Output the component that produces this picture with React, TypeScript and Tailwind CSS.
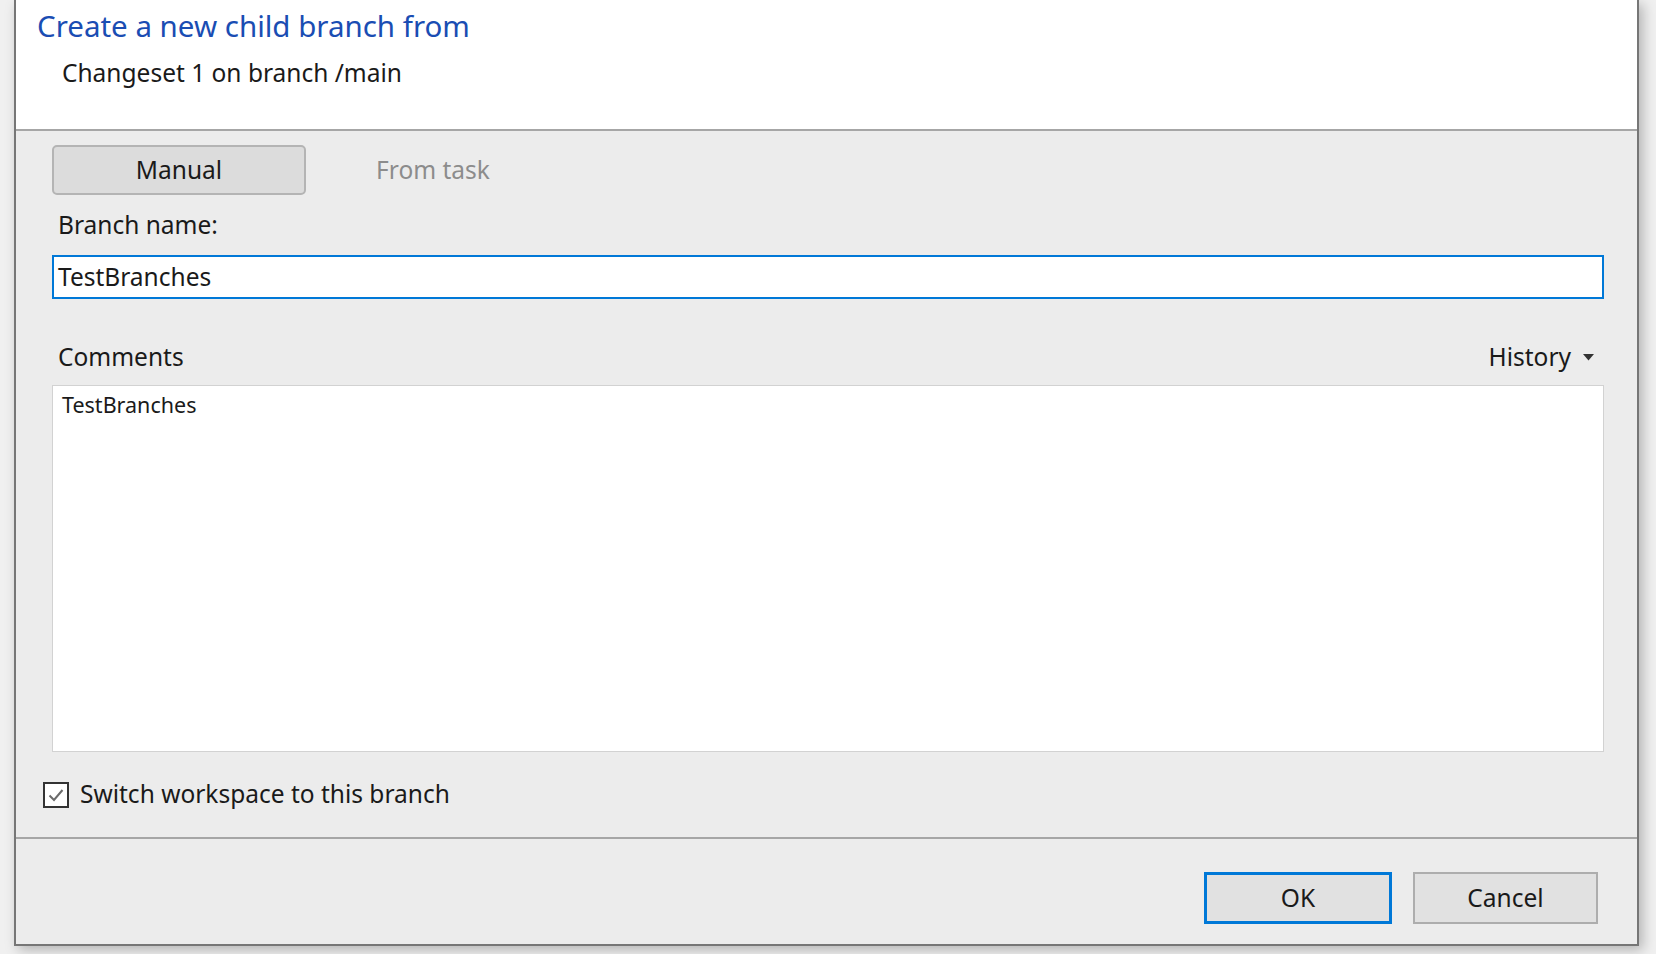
import React from "react";

const font = { fontFamily: '"Noto Sans", "Open Sans", sans-serif' };

function Check() {
  return (
    <div className="w-[26px] h-[26px] border-2 border-[#333333] bg-white flex items-center justify-center">
      <svg width="18" height="18" viewBox="0 0 18 18">
        <path d="M2.5 9.5 L7 14 L15.5 4" fill="none" stroke="#6b6b6b" strokeWidth="2" />
      </svg>
    </div>
  );
}

export default function App() {
  return (
    <div
      className="w-[1656px] h-[954px] bg-[#f0f0f0] overflow-hidden text-[#1a1a1a]"
      style={font}
    >
      <div className="ml-[14px] w-[1625px] h-[946px] flex flex-col border-x-2 border-b-2 border-[#767676] bg-[#ececec] shadow-[4px_4px_12px_rgba(0,0,0,0.25)]">
        {/* header */}
        <div className="h-[131px] shrink-0 bg-white border-b-2 border-[#a6a6a6] pl-[21px] pt-[5px]">
          <div className="text-[29.5px] leading-[42px] text-[#1a4db3]">
            Create a new child branch from
          </div>
          <div className="pl-[25px] mt-[10px] text-[24.5px] leading-[32px]">
            Changeset 1 on branch /main
          </div>
        </div>

        {/* body */}
        <div className="flex-1 flex flex-col pl-[36px] pr-[33px] pt-[14px] text-[24.5px]">
          <div className="flex items-center h-[50px]">
            <div className="w-[254px] h-[50px] rounded-[5px] border-2 border-[#b4b4b4] bg-[#dcdcdc] flex items-center justify-center">
              Manual
            </div>
            <div className="w-[254px] flex items-center justify-center text-[#8c8c8c]">
              From task
            </div>
          </div>

          <div className="h-[60px] flex items-center pl-[6px]">Branch name:</div>

          <div className="h-[44px] border-2 border-[#0078d7] bg-white flex items-center pl-[4px]">
            TestBranches
          </div>

          <div className="h-[86px] flex items-end justify-between pb-[14px] pl-[6px] pr-[10px]">
            <span className="leading-[28px]">Comments</span>
            <span className="flex items-center gap-[12px] leading-[28px]">
              History
              <svg width="11" height="7" viewBox="0 0 11 7">
                <path d="M0 0 H11 L5.5 6.5 Z" fill="#333333" />
              </svg>
            </span>
          </div>

          <div className="h-[367px] border border-[#d2d2d2] bg-white pl-[9px] pt-[5px] text-[21.5px] leading-[28px]">
            TestBranches
          </div>

          <div className="h-[85px] flex items-center -ml-[9px] gap-[11px]">
            <Check />
            <span>Switch workspace to this branch</span>
          </div>
        </div>

        {/* footer */}
        <div className="h-[107px] shrink-0 border-t-2 border-[#a6a6a6] flex justify-end gap-[21px] pt-[33px] pr-[39px] text-[24.5px]">
          <div className="w-[188px] h-[52px] border-[3px] border-[#0078d7] bg-[#e1e1e1] flex items-center justify-center">
            OK
          </div>
          <div className="w-[185px] h-[52px] border-2 border-[#adadad] bg-[#e1e1e1] flex items-center justify-center">
            Cancel
          </div>
        </div>
      </div>
    </div>
  );
}
